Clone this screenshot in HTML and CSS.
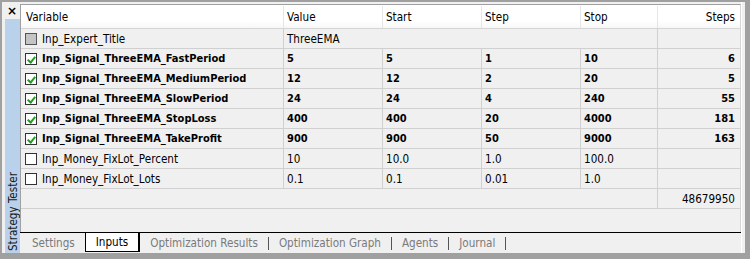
FILE: index.html
```html
<!DOCTYPE html>
<html lang="en">
<head>
    <meta charset="UTF-8">
    <title>Strategy Tester - Inputs</title>
    <link rel="stylesheet" href="styles.css">
</head>

<body>
    <div class="window">
        <div class="side">
            <div class="close">&#215;</div>
            <div class="side-bar"><span>Strategy Tester</span></div>
        </div>

        <div class="main">
            <div class="grid">
                <div class="row head">
                    <div class="cell">Variable</div>
                    <div class="cell">Value</div>
                    <div class="cell">Start</div>
                    <div class="cell">Step</div>
                    <div class="cell">Stop</div>
                    <div class="cell num">Steps</div>
                </div>

                <div class="row">
                    <div class="cell"><span class="check off"></span>Inp_Expert_Title</div>
                    <div class="cell wide">ThreeEMA</div>
                    <div class="cell num"></div>
                </div>

                <div class="row bold">
                    <div class="cell"><span class="check on"></span>Inp_Signal_ThreeEMA_FastPeriod</div>
                    <div class="cell">5</div>
                    <div class="cell">5</div>
                    <div class="cell">1</div>
                    <div class="cell">10</div>
                    <div class="cell num">6</div>
                </div>
                <div class="row bold">
                    <div class="cell"><span class="check on"></span>Inp_Signal_ThreeEMA_MediumPeriod</div>
                    <div class="cell">12</div>
                    <div class="cell">12</div>
                    <div class="cell">2</div>
                    <div class="cell">20</div>
                    <div class="cell num">5</div>
                </div>
                <div class="row bold">
                    <div class="cell"><span class="check on"></span>Inp_Signal_ThreeEMA_SlowPeriod</div>
                    <div class="cell">24</div>
                    <div class="cell">24</div>
                    <div class="cell">4</div>
                    <div class="cell">240</div>
                    <div class="cell num">55</div>
                </div>
                <div class="row bold">
                    <div class="cell"><span class="check on"></span>Inp_Signal_ThreeEMA_StopLoss</div>
                    <div class="cell">400</div>
                    <div class="cell">400</div>
                    <div class="cell">20</div>
                    <div class="cell">4000</div>
                    <div class="cell num">181</div>
                </div>
                <div class="row bold">
                    <div class="cell"><span class="check on"></span>Inp_Signal_ThreeEMA_TakeProfit</div>
                    <div class="cell">900</div>
                    <div class="cell">900</div>
                    <div class="cell">50</div>
                    <div class="cell">9000</div>
                    <div class="cell num">163</div>
                </div>

                <div class="row">
                    <div class="cell"><span class="check"></span>Inp_Money_FixLot_Percent</div>
                    <div class="cell">10</div>
                    <div class="cell">10.0</div>
                    <div class="cell">1.0</div>
                    <div class="cell">100.0</div>
                    <div class="cell num"></div>
                </div>
                <div class="row">
                    <div class="cell"><span class="check"></span>Inp_Money_FixLot_Lots</div>
                    <div class="cell">0.1</div>
                    <div class="cell">0.1</div>
                    <div class="cell">0.01</div>
                    <div class="cell">1.0</div>
                    <div class="cell num"></div>
                </div>

                <!-- total number of passes -->
                <div class="row">
                    <div class="cell span5"></div>
                    <div class="cell num">48679950</div>
                </div>
            </div>

            <div class="tabs">
                <span class="tab">Settings</span>
                <span class="tab active">Inputs</span>
                <span class="tab">Optimization Results</span>
                <span class="sep"></span>
                <span class="tab">Optimization Graph</span>
                <span class="sep"></span>
                <span class="tab">Agents</span>
                <span class="sep"></span>
                <span class="tab">Journal</span>
                <span class="sep"></span>
            </div>
        </div>
    </div>
</body>

</html>
```

FILE: styles.css
```css
/* Basic reset */
* {
    margin: 0;
    padding: 0;
    box-sizing: border-box;
}

body {
    font-family: 'DejaVu Sans Condensed', 'Liberation Sans', sans-serif;
    font-size: 11.6px;
    color: #000;
    background-color: #f0f0f0;
}

.window {
    width: 750px;
    height: 259px;
    display: flex;
    background-color: #f0f0f0;
    border: 2px solid #a0a0a0;
    border-right-width: 5px;
    border-bottom-width: 6px;
}

/* Left vertical caption */
.side {
    width: 18px;
    display: flex;
    flex-direction: column;
    padding-left: 3px;
}

.close {
    height: 17px;
    font-family: 'DejaVu Sans', sans-serif;
    font-size: 12px;
    font-weight: bold;
    line-height: 12px;
    padding: 3px 0 0 2px;
}

.side-bar {
    flex: 1;
    background-color: #b9d1ea;
    display: flex;
    align-items: flex-end;
    justify-content: center;
}

.side-bar span {
    writing-mode: vertical-rl;
    transform: rotate(180deg);
    white-space: nowrap;
    padding-top: 2px;
    color: #1a1a1a;
}

.main {
    flex: 1;
    display: flex;
    flex-direction: column;
    padding-top: 2px;
    margin-right: 3px;
    border-right: 1px solid #ffffff;
}

/* Inputs list */
.grid {
    height: 228px;
    border-top: 1px solid #a0a0a0;
    border-left: 1px solid #a0a0a0;
    border-right: 1px solid #d4d4d4;
}

.row {
    display: grid;
    grid-template-columns: 263px 99px 99px 99px 77px 1fr;
    height: 20px;
    border-bottom: 1px solid #d0d0d0;
}

.cell {
    display: flex;
    align-items: center;
    padding-left: 3px;
    border-right: 1px solid #d0d0d0;
    white-space: nowrap;
    overflow: hidden;
}

.cell:first-child {
    padding-left: 4px;
}

.cell:last-child {
    border-right: none;
}

.cell.num {
    justify-content: flex-end;
    padding-right: 5px;
}

.cell.wide {
    grid-column: span 4;
}

.cell.span5 {
    grid-column: span 5;
}

.row.head {
    height: 24px;
    padding-top: 1px;
    background: linear-gradient(#ffffff, #ffffff 70%, #f7f7f7);
    border-bottom-color: #d5d5d5;
}

.row.head .cell {
    border-right-color: #e6e6e6;
}

.row.head .cell:first-child {
    padding-left: 5px;
}

.row.bold {
    font-size: 11px;
    font-weight: bold;
}

/* Checkboxes */
.check {
    width: 12px;
    height: 12px;
    margin-right: 5px;
    border: 1px solid #333;
    background-color: #fff;
    flex-shrink: 0;
    position: relative;
}

.check.off {
    background-color: #c4c4c4;
    border-color: #555;
}

.check.on::after {
    content: "";
    position: absolute;
    left: 3px;
    top: 1px;
    width: 3px;
    height: 6px;
    border: solid #1fa01f;
    border-width: 0 2px 2px 0;
    transform: rotate(40deg);
}

/* Bottom tabs */
.tabs {
    height: 21px;
    display: flex;
    align-items: stretch;
    border-top: 1px solid #000;
    padding-left: 2px;
}

.tab {
    display: flex;
    align-items: center;
    padding: 0 10px;
    color: #7a7a7a;
}

.tab.active {
    color: #000;
    background-color: #fff;
    border: 1px solid #000;
    border-top: none;
    border-right-width: 2px;
    margin-bottom: 1px;
}

.sep {
    width: 1px;
    margin: 4px 0 3px;
    background-color: #555;
}
```
